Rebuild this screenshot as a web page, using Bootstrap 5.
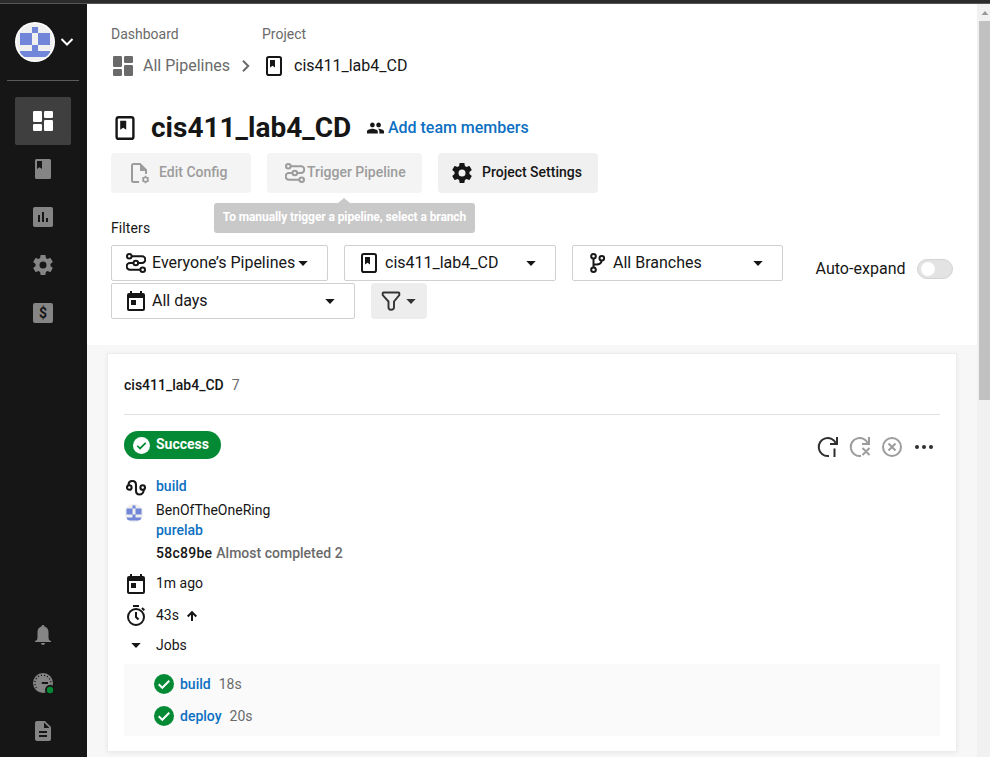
<!DOCTYPE html>
<html lang="en">
<head>
<meta charset="utf-8">
<meta name="viewport" content="width=device-width, initial-scale=1">
<title>cis411_lab4_CD - Pipelines</title>
<link href="https://cdn.jsdelivr.net/npm/bootstrap@5.3.0/dist/css/bootstrap.min.css" rel="stylesheet">
<style>
  html, body { height: 757px; overflow: hidden; }
  body { font-family: Roboto, "Liberation Sans", sans-serif; font-size: 14px; line-height: 20px; color: #161616; background: #fff; }
  svg { display: block; flex: none; overflow: visible; }
  a { color: #0c70c2; text-decoration: none; }
  .topstrip { height: 4px; background: #2b2b2b; border-bottom: 1px solid #555; }
  .shell { height: 753px; }
  .medium { font-weight: 500; }
  .sidebar { width: 87px; background: #161616; color: #858585; padding: 18px 0 2px; }
  .account { height: 40px; padding-left: 15px; gap: 6px; }
  .side-rule { height: 1px; background: #5a5a5a; margin: 18px 8px 16px 7px; }
  .side-item { width: 56px; height: 48px; margin-left: 15px; color: #858585; border-radius: 2px; }
  .side-item.current { background: #3f3f3f; color: #fff; }
  .dollar { width: 20px; height: 20px; border-radius: 2px; background: #858585; color: #161616; font: 700 14px/20px Roboto, sans-serif; }
  .pagecol { width: 890px; background: #f7f7f7; }
  .pagehead { height: 341px; padding: 20px 0 0 24px; }
  .crumb-label { color: #6a6a6a; }
  .crumb-label div:first-child { width: 151px; }
  .crumbs { height: 20px; margin-top: 12px; padding-left: 2px; font-size: 16px; }
  .titlebar { height: 40px; margin-top: 32px; }
  .titlebar h1 { font-size: 28px; line-height: 40px; font-weight: 700; margin: 0 17px 0 16px; width: 199px; white-space: nowrap; }
  .titlebar a { font-size: 16px; font-weight: 500; margin-left: 4px; letter-spacing: -.02px; }
  .actions { height: 40px; margin-top: 5px; gap: 16px; }
  .act { height: 40px; border-radius: 4px; background: #f4f4f4; color: #9c9c9c; font-weight: 500; white-space: nowrap; }
  .act span { position: relative; top: -1px; }
  .act.live { background: #f0f0f0; color: #161616; }
  .hint { left: -53px; top: 50px; width: 261px; height: 30px; background: #c9c9c9; color: #fff; border-radius: 3px; font-size: 12px; font-weight: 700; line-height: 29px; text-align: center; letter-spacing: -.09px; }
  .hint::before { content: ""; position: absolute; left: 124px; top: -5px; border: 6px solid transparent; border-top: 0; border-bottom: 5px solid #c9c9c9; }
  .filter-title { margin-top: 25px; letter-spacing: .1px; }
  .filters { margin-top: 7px; }
  .pick { height: 36px; border: 1px solid #d0d0d0; border-radius: 2px; font-size: 16px; color: #161616; background: #fff; white-space: nowrap; }
  .funnel { width: 56px; height: 36px; background: #ededed; border-radius: 4px; color: #343434; padding-left: 10px; }
  .expand { margin-left: 32px; padding-top: 11px; font-size: 16px; }
  .expand span { width: 102px; letter-spacing: .03px; padding-left: .5px; }
  .toggle { width: 36px; height: 20px; border-radius: 10px; border: 1px solid #d3d3d3; background: #e3e3e3; padding: 2px 3px; }
  .toggle i { display: block; width: 14px; height: 14px; border-radius: 7px; background: #fff; }
  .run-card { margin: 8px 0 0 20px; width: 850px; height: 399px; background: #fff; border: 1px solid #ededed; box-shadow: 0 1px 5px rgba(0,0,0,.06); padding: 0 16px; }
  .run-head { height: 61px; padding-top: 2px; border-bottom: 1px solid #e0e0e0; }
  .grey { color: #6a6a6a; }
  .status { width: 97px; height: 28px; border-radius: 14px; background: #048a34; color: #fff; font-weight: 700; padding-left: 9px; gap: 6px; margin-top: 16px; }
  .status span { position: relative; top: -1px; }
  .tools { gap: 12px; padding: 4px 6px 0 0; }
  .detail { height: 20px; }
  .lead-cell { width: 32px; padding-left: 2px; }
  .under { padding-left: 32px; }
  .jobs { background: #fafafa; height: 72px; margin-top: 9px; padding: 4px 0 4px 30px; }
  .job { height: 32px; }
  .scroller { width: 13px; background: #f1f1f1; padding: 7px 0 0 2px; }
  .thumb { height: 379px; background: #c1c1c1; margin-top: 6px; }
</style>
<script src="https://cdn.jsdelivr.net/npm/bootstrap@5.3.0/dist/js/bootstrap.bundle.min.js"></script>
</head>
<body>
<svg width="0" height="0" class="position-absolute" aria-hidden="true">
  <symbol id="dash" viewBox="0 0 20 20"><g fill="currentColor"><rect width="9" height="11" rx="1.3"/><rect y="13" width="9" height="7" rx="1.3"/><rect x="11" width="9" height="7" rx="1.3"/><rect x="11" y="9" width="9" height="11" rx="1.3"/></g></symbol>
  <symbol id="book" viewBox="0 0 16 20"><rect x="1" y="1" width="14" height="18" rx="1.8" fill="none" stroke="currentColor" stroke-width="2"/><path d="M4 4h5v7.5L6.5 9.7 4 11.5z" fill="currentColor"/></symbol>
  <symbol id="gear" viewBox="2 2 20 20"><path fill="currentColor" d="M19.43 12.98c.04-.32.07-.64.07-.98s-.03-.66-.07-.98l2.11-1.65c.19-.15.24-.42.12-.64l-2-3.46c-.12-.22-.39-.3-.61-.22l-2.49 1c-.52-.4-1.08-.73-1.69-.98l-.38-2.65C14.46 2.18 14.25 2 14 2h-4c-.25 0-.46.18-.49.42l-.38 2.65c-.61.25-1.17.59-1.69.98l-2.49-1c-.23-.09-.49 0-.61.22l-2 3.46c-.13.22-.07.49.12.64l2.11 1.65c-.04.32-.07.65-.07.98s.03.66.07.98l-2.11 1.65c-.19.15-.24.42-.12.64l2 3.46c.12.22.39.3.61.22l2.49-1c.52.4 1.08.73 1.69.98l.38 2.65c.03.24.24.42.49.42h4c.25 0 .46-.18.49-.42l.38-2.65c.61-.25 1.17-.59 1.69-.98l2.49 1c.23.09.49 0 .61-.22l2-3.46c.12-.22.07-.49-.12-.64zM12 15.5A3.5 3.5 0 1 1 12 8.500a3.500 3.500 0 0 1 0 7z"/></symbol>
  <symbol id="pipes" viewBox="0 0 20 20"><g fill="none" stroke="currentColor" stroke-width="2"><circle cx="3.300" cy="3.300" r="2.300"/><circle cx="9.800" cy="10" r="2.300"/><circle cx="16.700" cy="16.700" r="2.300"/><path d="M5.600 3.300H16a3.300 3.300 0 0 1 0 6.600h-3.900M7.500 10H4a3.300 3.300 0 0 0 0 6.700h10.400"/></g></symbol>
  <symbol id="cal" viewBox="0 0 18 20"><path fill="currentColor" d="M13 0v2H5V0H3v2H2a2 2 0 0 0-2 2v14c0 1.100.9 2 2 2h14a2 2 0 0 0 2-2V4a2 2 0 0 0-2-2h-1V0zM2 7h14v11H2z" fill-rule="evenodd"/><rect x="4" y="9" width="5" height="5" fill="currentColor"/></symbol>
  <symbol id="caret" viewBox="0 0 10 5"><path d="M.3 0h9.400L5 5z" fill="currentColor"/></symbol>
  <symbol id="tick" viewBox="0 0 20 20"><circle cx="10" cy="10" r="10" fill="#048a34"/><path d="M4.700 10.300l3.600 3.500 7-7" fill="none" stroke="#fff" stroke-width="2"/></symbol>
  <symbol id="face" viewBox="0 0 40 40"><circle cx="20" cy="20" r="20" fill="#fff"/><circle cx="20" cy="20" r="18.500" fill="#f0f0f0"/><clipPath id="fc"><circle cx="20" cy="20" r="18.500"/></clipPath><g fill="#7186d8" clip-path="url(#fc)"><path d="M17 5h6v6h12v12H23v6h12v6H5v-6h12v-6H5V11h12z"/><path fill="#f0f0f0" d="M17 11h6v12h-6z"/></g></symbol>
</svg>

<div class="topstrip"></div>
<div class="shell d-flex">
  <nav class="sidebar d-flex flex-column flex-shrink-0">
    <div class="account d-flex align-items-center">
      <svg width="40" height="40"><use href="#face"/></svg>
      <svg width="12" height="8" viewBox="0 0 12 8"><path d="M.5 1L6 6.500 11.500 1" fill="none" stroke="#fff" stroke-width="2"/></svg>
    </div>
    <div class="side-rule"></div>
    <a class="side-item current d-flex align-items-center justify-content-center" href="#"><svg width="20" height="20"><use href="#dash"/></svg></a>
    <a class="side-item d-flex align-items-center justify-content-center" href="#"><svg width="16" height="20" viewBox="0 0 16 20"><path fill="currentColor" fill-rule="evenodd" d="M1.500 0h13A1.500 1.500 0 0 1 16 1.500v17a1.500 1.500 0 0 1-1.500 1.500h-13A1.500 1.500 0 0 1 0 18.500v-17A1.500 1.500 0 0 1 1.500 0zM2 2v8l2.500-1.800L7 10V2z"/></svg></a>
    <a class="side-item d-flex align-items-center justify-content-center" href="#"><svg width="20" height="20" viewBox="0 0 20 20"><rect width="20" height="20" rx="1.800" fill="currentColor"/><path d="M5 8h2v7H5zM9 5h2v10H9zM13 11h2v4h-2z" fill="#161616"/></svg></a>
    <a class="side-item d-flex align-items-center justify-content-center" href="#"><svg width="20" height="20"><use href="#gear"/></svg></a>
    <a class="side-item d-flex align-items-center justify-content-center" href="#"><span class="dollar text-center">$</span></a>
    <a class="side-item d-flex align-items-center justify-content-center mt-auto" href="#"><svg width="16" height="20" viewBox="0 0 16 20"><path fill="currentColor" d="M8 0c.9 0 1.500.6 1.500 1.600C12 2.300 13.500 4.500 13.500 7v5.500L14 15l2 1v1H0v-1l2-1 .5-2.500V7c0-2.500 1.500-4.700 4-5.400C6.500.6 7.100 0 8 0zM6 18h4a2 2 0 0 1-4 0z"/></svg></a>
    <a class="side-item d-flex align-items-center justify-content-center" href="#"><svg width="20" height="20" viewBox="0 0 20 20"><circle cx="10" cy="10" r="10" fill="currentColor"/><path d="M3.500 15A8 8 0 1 1 17.800 11.500" fill="none" stroke="#161616" stroke-width="1.300" stroke-dasharray="1.100 2"/><path d="M9.500 9h5.500v2H9.500a1 1 0 0 1 0-2z" fill="#161616"/><circle cx="17" cy="17" r="5" fill="#161616"/><circle cx="17" cy="17" r="3.200" fill="#048a34"/></svg></a>
    <a class="side-item d-flex align-items-center justify-content-center" href="#"><svg width="16" height="20" viewBox="0 0 16 20"><path fill="currentColor" fill-rule="evenodd" d="M2 0h8l6 6v12a2 2 0 0 1-2 2H2a2 2 0 0 1-2-2V2C0 .9.900 0 2 0zM9 1.500V7h5.500zM4 10v2h8v-2zM4 14v2h8v-2z"/></svg></a>
  </nav>

  <main class="pagecol flex-shrink-0">
    <header class="pagehead bg-white">
      <div class="crumb-label d-flex"><div>Dashboard</div><div>Project</div></div>
      <div class="crumbs d-flex align-items-center">
        <svg width="20" height="20" color="#6a6a6a"><use href="#dash"/></svg>
        <span class="grey" style="margin-left:10px;width:87px">All Pipelines</span>
        <svg width="8" height="12" viewBox="0 0 8 12" style="margin-left:12px"><path d="M1 .8L6.200 6 1 11.200" fill="none" stroke="#6a6a6a" stroke-width="2"/></svg>
        <svg width="16" height="20" style="margin-left:16px"><use href="#book"/></svg>
        <span style="margin-left:12px">cis411_lab4_CD</span>
      </div>
      <div class="titlebar d-flex align-items-center">
        <svg width="20" height="24" style="margin-left:4px"><use href="#book"/></svg>
        <h1>cis411_lab4_CD</h1>
        <svg width="17" height="12" viewBox="1 5 22 14"><path fill="currentColor" d="M16 11c1.660 0 3-1.340 3-3s-1.340-3-3-3-3 1.340-3 3 1.340 3 3 3zm-8 0c1.660 0 3-1.340 3-3S9.660 5 8 5 5 6.340 5 8s1.340 3 3 3zm0 2c-2.330 0-7 1.170-7 3.500V19h14v-2.500c0-2.330-4.670-3.500-7-3.500zm8 0c-.29 0-.62.02-.97.05 1.160.84 1.970 1.970 1.970 3.450V19h6v-2.500c0-2.330-4.670-3.500-7-3.500z"/></svg>
        <a href="#">Add team members</a>
      </div>
      <div class="actions d-flex">
        <div class="act d-flex align-items-center" style="width:140px;padding-left:20px">
          <svg width="18" height="20" viewBox="0 0 18 20"><path d="M8 19H2.500A1.500 1.500 0 0 1 1 17.500v-15A1.500 1.500 0 0 1 2.500 1H9l6 6v4" fill="none" stroke="currentColor" stroke-width="2"/><path d="M9 1v7h6.500z" fill="currentColor"/><circle cx="14.500" cy="16.500" r="2.300" fill="none" stroke="currentColor" stroke-width="1.600"/><path d="M14.500 12.800v1.400M14.500 18.800v1.400M11.300 14.700l1.200.7M16.500 17.600l1.200.7M11.300 18.300l1.200-.7M16.500 15.400l1.200-.7" stroke="currentColor" stroke-width="1.400"/></svg>
          <span style="margin-left:10px">Edit Config</span>
        </div>
        <div class="act d-flex align-items-center position-relative" style="width:155px;padding-left:18px">
          <svg width="20" height="20"><use href="#pipes"/></svg>
          <span style="margin-left:2px">Trigger Pipeline</span>
          <div class="hint position-absolute">To manually trigger a pipeline, select a branch</div>
        </div>
        <div class="act live d-flex align-items-center" style="width:160px;padding-left:14px">
          <svg width="20" height="20"><use href="#gear"/></svg>
          <span style="margin-left:10px">Project Settings</span>
        </div>
      </div>
      <div class="filter-title">Filters</div>
      <div class="filters d-flex">
        <div class="pick d-flex align-items-center" style="width:217px;padding-left:14px">
          <svg width="20" height="20"><use href="#pipes"/></svg><span style="margin-left:6px;width:146px">Everyone’s Pipelines</span><svg width="10" height="5"><use href="#caret"/></svg>
        </div>
        <div class="pick d-flex align-items-center ms-3" style="width:212px;padding-left:16px">
          <svg width="16" height="20"><use href="#book"/></svg><span style="margin-left:8px;width:141px">cis411_lab4_CD</span><svg width="10" height="5"><use href="#caret"/></svg>
        </div>
        <div class="pick d-flex align-items-center ms-3" style="width:211px;padding-left:17px">
          <svg width="16" height="20" viewBox="0 0 16 20"><g fill="none" stroke="currentColor" stroke-width="2"><circle cx="3.500" cy="3.300" r="2.300"/><circle cx="3.500" cy="16.700" r="2.300"/><circle cx="11.800" cy="5.300" r="2.300"/><path d="M3.500 5.600v8.800M3.500 11.500h3c3 0 4.800-1.500 5.100-3.900"/></g></svg><span style="margin-left:7px;width:140px">All Branches</span><svg width="10" height="5"><use href="#caret"/></svg>
        </div>
        <div class="expand d-flex align-items-center"><span>Auto-expand</span><div class="toggle"><i></i></div></div>
      </div>
      <div class="d-flex" style="margin-top:2px">
        <div class="pick d-flex align-items-center" style="width:244px;padding-left:15px">
          <svg width="18" height="20"><use href="#cal"/></svg><span style="margin-left:7px;width:173px">All days</span><svg width="10" height="5"><use href="#caret"/></svg>
        </div>
        <div class="funnel d-flex align-items-center ms-3">
          <svg width="20" height="20" viewBox="0 0 20 20"><path d="M2.500 1.500h15a.8.8 0 0 1 .8.800v1.900L13 10.500v5.800c0 1.500-1.200 2.500-3 2.500s-2.500-1-2.500-2.500v-5.800L1.700 4.200V2.300a.8.800 0 0 1 .8-.8z" fill="none" stroke="currentColor" stroke-width="1.900" stroke-linejoin="round"/></svg><svg width="10" height="5" style="margin-left:5px"><use href="#caret"/></svg>
        </div>
      </div>
    </header>

    <section class="run-card">
      <div class="run-head d-flex align-items-center"><span class="medium">cis411_lab4_CD</span><span class="grey ms-2">7</span></div>
      <div class="d-flex justify-content-between">
        <div class="status d-flex align-items-center"><svg width="17" height="17" viewBox="0 0 20 20"><circle cx="10" cy="10" r="10" fill="#fff"/><path d="M5 10.300l3.300 3.200 6.700-6.700" fill="none" stroke="#048a34" stroke-width="2"/></svg><span>Success</span></div>
        <div class="tools d-flex align-items-center mt-3">
          <svg width="20" height="20" viewBox="0 0 20 20" fill="none" stroke="#2f2f2f" stroke-width="2"><path d="M11 19H10A9 9 0 1 1 18 6.500M19 0v7h-7M16.500 11.500V20"/></svg>
          <svg width="20" height="20" viewBox="0 0 20 20" fill="none" stroke="#9c9c9c" stroke-width="2"><path d="M11 19H10A9 9 0 1 1 18 6.500M19 0v7h-7M12.500 11l7 7M19.500 11l-7 7"/></svg>
          <svg width="20" height="20" viewBox="0 0 20 20" fill="none" stroke="#9c9c9c" stroke-width="2"><circle cx="10" cy="10" r="9"/><path d="M6.500 6.500l7 7M13.500 6.500l-7 7"/></svg>
          <svg width="20" height="20" viewBox="0 0 20 20" fill="#2f2f2f"><circle cx="3" cy="10" r="2"/><circle cx="10" cy="10" r="2"/><circle cx="17" cy="10" r="2"/></svg>
        </div>
      </div>
      <div class="detail d-flex align-items-center" style="margin-top:17px"><div class="lead-cell pt-1"><svg width="20" height="16" viewBox="0 0 20 16"><g fill="none" stroke="currentColor" stroke-width="2.100"><circle cx="3.300" cy="7.500" r="2.300"/><circle cx="16.700" cy="7.500" r="2.300"/><path d="M2.500 5.300C2.500 2.300 4 1 6.300 1S10 2.700 10 5v5.500c0 2.500 1.300 4 3.500 4s4.200-1.800 4.200-4.800"/></g></svg></div><a href="#" class="medium">build</a></div>
      <div class="detail d-flex align-items-center" style="margin-top:4px"><div class="lead-cell" style="padding:6px 0 0"><svg width="20" height="20" viewBox="0 0 40 40"><use href="#face" width="40" height="40"/></svg></div><span>BenOfTheOneRing</span></div>
      <div class="detail under medium"><a href="#">purelab</a></div>
      <div class="detail under medium d-flex" style="margin-top:3px"><span style="letter-spacing:.25px;margin-right:4px">58c89be</span><span class="grey" style="letter-spacing:.01px">Almost completed 2</span></div>
      <div class="detail d-flex align-items-center" style="margin-top:10px"><div class="lead-cell" style="padding:2px 0 0 3px"><svg width="18" height="20"><use href="#cal"/></svg></div><span>1m ago</span></div>
      <div class="detail d-flex align-items-center" style="margin-top:12px"><div class="lead-cell" style="padding-left:3px"><svg width="18" height="21" viewBox="0 0 18 21" fill="none" stroke="currentColor" stroke-width="2"><circle cx="9" cy="12" r="8"/><path d="M6 1h6M9 7v5l2.500 2.500M15 3l2.300 2.300"/></svg></div><span>43s</span><svg width="10" height="10" viewBox="0 0 10 10" style="margin:1px 0 0 8px" fill="none" stroke="currentColor" stroke-width="2"><path d="M5 10V1.500M.7 5.500L5 1.200l4.300 4.300"/></svg></div>
      <div class="detail d-flex align-items-center" style="margin-top:10px"><div class="lead-cell" style="padding:1px 0 0 7px"><svg width="10" height="5"><use href="#caret"/></svg></div><span>Jobs</span></div>
      <div class="jobs">
        <div class="job d-flex align-items-center"><svg width="20" height="20"><use href="#tick"/></svg><a href="#" class="medium" style="margin-left:6px">build</a><span class="grey ms-2">18s</span></div>
        <div class="job d-flex align-items-center"><svg width="20" height="20"><use href="#tick"/></svg><a href="#" class="medium" style="margin-left:6px">deploy</a><span class="grey ms-2">20s</span></div>
      </div>
    </section>
  </main>

  <div class="scroller flex-shrink-0">
    <svg width="11" height="4" viewBox="0 0 11 4"><path d="M2.500 4h7L6 0z" fill="#9a9a9a"/></svg>
    <div class="thumb"></div>
  </div>
</div>
</body>
</html>
